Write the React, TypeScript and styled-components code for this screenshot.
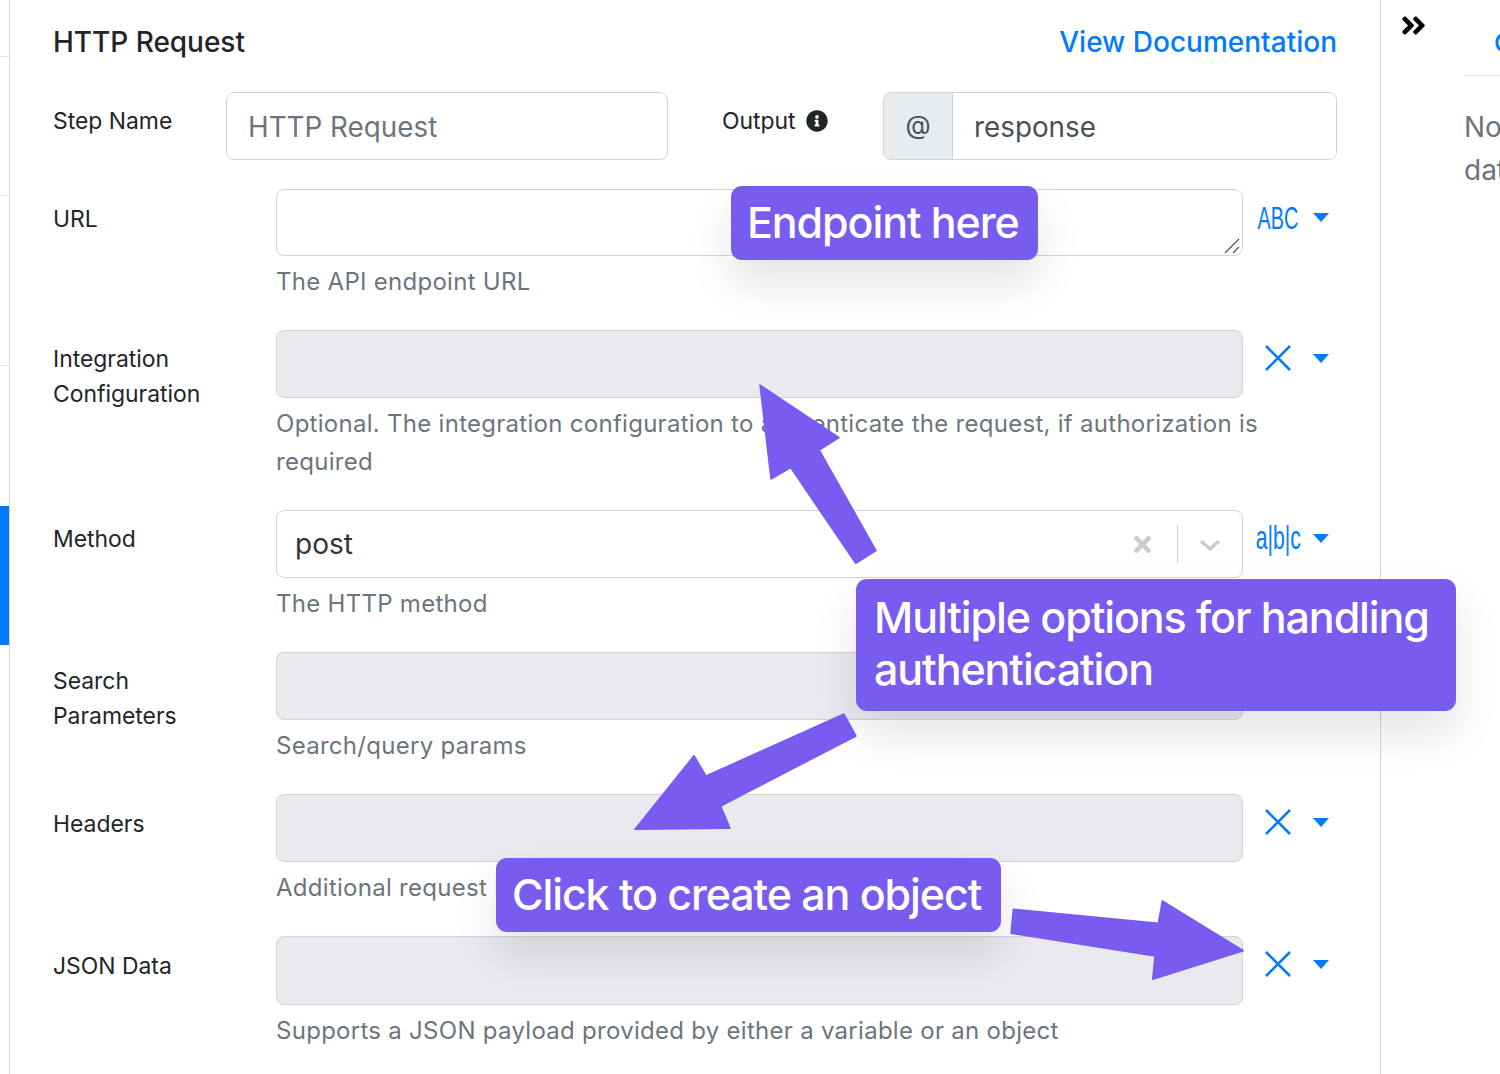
import React from "react";
import styled, { createGlobalStyle } from "styled-components";
import { FaInfoCircle, FaAngleDoubleRight, FaTimes } from "react-icons/fa";

const Global = createGlobalStyle`
  html, body { margin: 0; padding: 0; background: #fff; }
  body { font-family: Inter, "Liberation Sans", sans-serif; color: #212529; }
  * { box-sizing: border-box; }
`;

const Page = styled.div`
  position: relative;
  display: flex;
  width: 1500px;
  height: 1074px;
  overflow: hidden;
`;
const Rail = styled.nav`
  width: 10px;
  flex: none;
  border-right: 1px solid #d4d4d4;
  display: flex;
  flex-direction: column;
`;
const RailItem = styled.div<{ $h: number; $active?: boolean; $plain?: boolean }>`
  height: ${(p) => p.$h}px;
  flex: none;
  background: ${(p) => (p.$active ? "#007bff" : "transparent")};
  border-bottom: 1px solid ${(p) => (p.$active || p.$plain ? "transparent" : "#e4e4e4")};
`;
const Main = styled.main`
  width: 1370px;
  flex: none;
  padding: 0 43px 0 43px;
`;
const Header = styled.header`
  height: 92px;
  padding-top: 23px;
  display: flex;
  justify-content: space-between;
  align-items: flex-start;
  line-height: 38px;
  font-size: 28px;
  font-weight: 500;
`;
const Title = styled.h1`
  margin: 0;
  font: inherit;
  letter-spacing: -0.03px;
`;
const DocLink = styled.a`
  color: #007bff;
`;
const StepRow = styled.div`
  display: flex;
  height: 68px;
  margin-bottom: 29px;
`;
const Label = styled.label<{ $pt?: number }>`
  display: block;
  font-size: 22.9px;
  line-height: 35px;
  padding-top: ${(p) => p.$pt ?? 12}px;
`;
const StepLabel = styled(Label)`
  width: 173px;
  flex: none;
`;
const OutputLabel = styled(Label)`
  width: 161px;
  flex: none;
  margin-left: 54px;
  display: flex;
  gap: 10px;
  align-items: flex-start;
  svg { margin-top: 6px; font-size: 22px; color: #212529; }
`;
const TextInput = styled.input`
  display: block;
  border: 1px solid #ced4da;
  border-radius: 8px;
  background: #fff;
  font: inherit;
  font-size: 27.8px;
  padding: 2px 21px 0;
  color: #495057;
  outline: none;
  &::placeholder { color: #6c757d; opacity: 1; }
`;
const StepInput = styled(TextInput)`
  width: 442px;
  height: 68px;
`;
const Group = styled.div`
  display: flex;
  width: 454px;
  height: 68px;
  border: 1px solid #ced4da;
  border-radius: 8px;
  overflow: hidden;
`;
const Addon = styled.span`
  width: 69px;
  flex: none;
  background: #e9ecef;
  border-right: 1px solid #ced4da;
  display: flex;
  align-items: center;
  justify-content: center;
  padding-bottom: 3px;
  font-size: 26px;
  color: #495057;
`;
const GroupInput = styled(TextInput)`
  border: 0;
  border-radius: 0;
  flex: 1;
  min-width: 0;
`;
const Row = styled.div`
  display: grid;
  grid-template-columns: 223px 967px 94px;
  margin-bottom: 29px;
`;
const Field = styled.div`
  position: relative;
  min-width: 0;
`;
const TextArea = styled.textarea`
  display: block;
  width: 967px;
  height: 67px;
  border: 1px solid #ced4da;
  border-radius: 8px;
  background: #fff;
  resize: none;
  outline: none;
`;
const ResizeHandle = styled.svg`
  position: absolute;
  left: 948px;
  top: 48px;
  width: 17px;
  height: 17px;
  color: #555;
`;
const Blank = styled.div<{ $h?: number }>`
  height: ${(p) => p.$h ?? 68}px;
  border: 1px solid #ced4da;
  border-radius: 8px;
  background: #e9eaee;
`;
const Help = styled.p`
  margin: 7px 0 0;
  width: 1000px;
  font-size: 24px;
  letter-spacing: 0.28px;
  line-height: 38px;
  color: #6c757d;
`;
const SelectBox = styled.div`
  height: 68px;
  border: 1px solid #ced4da;
  border-radius: 8px;
  display: flex;
  align-items: center;
  padding-left: 18px;
  font-size: 28px;
  color: #333;
`;
const SelectValue = styled.span`
  flex: 1;
`;
const ClearIcon = styled(FaTimes)`
  color: #ccc;
  font-size: 25px;
  margin-right: 22px;
`;
const Separator = styled.span`
  width: 1px;
  height: 38px;
  background: #ccc;
`;
const Chevron = styled.svg`
  width: 24px;
  height: 24px;
  margin: 2px 20px 0 20px;
  color: #ccc;
`;
const Selector = styled.div`
  height: 57px;
  position: relative;
  display: flex;
  align-items: center;
  color: #007bff;
`;
const SelectorIcon = styled.span`
  width: 70px;
  display: flex;
  justify-content: center;
  align-items: center;
`;
const NarrowText = styled.span<{ $size: number; $sx: number; $up?: number }>`
  display: inline-block;
  font-family: "Liberation Sans", sans-serif;
  font-size: ${(p) => p.$size}px;
  line-height: 1;
  margin-top: ${(p) => -(p.$up ?? 0)}px;
  transform: scaleX(${(p) => p.$sx});
  white-space: nowrap;
`;
const ClearGlyph = styled.svg`
  width: 26px;
  height: 26px;
  margin-top: -1px;
`;
const Caret = styled.svg`
  width: 16px;
  height: 9px;
  margin-top: 0;
`;
const Aside = styled.aside`
  position: relative;
  flex: 1;
  border-left: 1px solid #d4d4d4;
  padding: 75px 0 0 83px;
  width: 120px;
  white-space: nowrap;
`;
const Collapse = styled(FaAngleDoubleRight)`
  position: absolute;
  left: 18px;
  top: 11px;
  font-size: 29px;
  color: #000;
`;
const TabLabel = styled.span`
  position: absolute;
  left: 113px;
  top: 27px;
  font-size: 26px;
  color: #007bff;
  font-weight: 500;
`;
const AsideRule = styled.div`
  border-top: 1px solid #dee2e6;
  margin-bottom: 30px;
  width: 60px;
`;
const Empty = styled.p`
  margin: 0;
  width: 36px;
  font-size: 28px;
  line-height: 43px;
  color: #6c757d;
  overflow: visible;
  white-space: normal;
`;
const Callout = styled.div<{ $l: number; $t: number; $w: number; $h: number; $tall?: boolean }>`
  position: absolute;
  left: ${(p) => p.$l}px;
  top: ${(p) => p.$t}px;
  width: ${(p) => p.$w}px;
  height: ${(p) => p.$h}px;
  padding: ${(p) => (p.$tall ? "12px 0 0 18px" : "10px 0 0 16px")};
  background: #785bef;
  color: #fff;
  border-radius: 11px;
  font-size: 43px;
  line-height: 52px;
  font-weight: 500;
  letter-spacing: -1.1px;
  white-space: nowrap;
  box-shadow: 0 22px 45px rgba(0, 0, 0, 0.11);
`;
const Arrows = styled.svg`
  position: absolute;
  inset: 0;
  width: 1500px;
  height: 1074px;
  pointer-events: none;
`;

const X = () => (
  <ClearGlyph viewBox="0 0 26 26" fill="none" stroke="currentColor" strokeWidth="2.6">
    <path d="M1 1 L25 25 M25 1 L1 25" />
  </ClearGlyph>
);

const Sel = ({ icon }: { icon: React.ReactNode }) => (
  <Selector>
    <SelectorIcon>{icon}</SelectorIcon>
    <Caret viewBox="0 0 16 9"><path d="M0 0 H16 L8 9 Z" fill="currentColor" /></Caret>
  </Selector>
);

const Arrow = ({ pts }: { pts: string }) => (
  <polygon points={pts} fill="#785bef" stroke="#785bef" strokeWidth="1.5" strokeLinejoin="round" />
);

export default function App() {
  return (
    <Page>
      <Global />
      <Rail>
        <RailItem $h={57} />
        <RailItem $h={139} />
        <RailItem $h={170} />
        <RailItem $h={140} $plain />
        <RailItem $h={139} $active />
      </Rail>
      <Main>
        <Header>
          <Title>HTTP Request</Title>
          <DocLink>View Documentation</DocLink>
        </Header>
        <StepRow>
          <StepLabel>Step Name</StepLabel>
          <StepInput placeholder="HTTP Request" />
          <OutputLabel>Output <FaInfoCircle /></OutputLabel>
          <Group>
            <Addon>@</Addon>
            <GroupInput defaultValue="response" />
          </Group>
        </StepRow>
        <Row>
          <Label $pt={13}>URL</Label>
          <Field>
            <TextArea />
            <ResizeHandle viewBox="0 0 17 17" fill="none" stroke="currentColor" strokeWidth="1.3">
              <path d="M1 16 L15 2 M9 16 L15 10" />
            </ResizeHandle>
            <Help>The API endpoint URL</Help>
          </Field>
          <Sel icon={<NarrowText $size={32} $sx={0.62}>ABC</NarrowText>} />
        </Row>
        <Row>
          <Label>Integration<br />Configuration</Label>
          <Field>
            <Blank />
            <Help>Optional. The integration configuration to authenticate the request, if authorization is required</Help>
          </Field>
          <Sel icon={<X />} />
        </Row>
        <Row>
          <Label>Method</Label>
          <Field>
            <SelectBox>
              <SelectValue>post</SelectValue>
              <ClearIcon />
              <Separator />
              <Chevron viewBox="0 0 24 24" fill="none" stroke="currentColor" strokeWidth="3.5">
                <path d="M3 8 L12 16 L21 8" />
              </Chevron>
            </SelectBox>
            <Help>The HTTP method</Help>
          </Field>
          <Sel icon={<NarrowText $size={33} $sx={0.64} $up={3}>a|b|c</NarrowText>} />
        </Row>
        <Row>
          <Label>Search<br />Parameters</Label>
          <Field>
            <Blank />
            <Help>Search/query params</Help>
          </Field>
          <Sel icon={<X />} />
        </Row>
        <Row>
          <Label $pt={13}>Headers</Label>
          <Field>
            <Blank />
            <Help>Additional request headers</Help>
          </Field>
          <Sel icon={<X />} />
        </Row>
        <Row>
          <Label $pt={13}>JSON Data</Label>
          <Field>
            <Blank $h={69} />
            <Help>Supports a JSON payload provided by either a variable or an object</Help>
          </Field>
          <Sel icon={<X />} />
        </Row>
      </Main>
      <Aside>
        <Collapse />
        <TabLabel>Output</TabLabel>
        <AsideRule />
        <Empty>No data</Empty>
      </Aside>
      <Callout $l={731} $t={186} $w={307} $h={74}>Endpoint here</Callout>
      <Callout $l={856} $t={579} $w={600} $h={132} $tall>Multiple options for handling<br />authentication</Callout>
      <Callout $l={496} $t={858} $w={505} $h={74}>Click to create an object</Callout>
      <Arrows viewBox="0 0 1500 1074">
        <Arrow pts="760,385 839,437.7 819.3,450 876,550.7 855.7,563.3 790.7,467.7 771,479" />
        <Arrow pts="844,714 856,736 720.7,806 730,828.3 635,829.3 694,755.7 706,776" />
        <Arrow pts="1013.3,909.3 1158.3,923.3 1162.3,901 1243.3,950.7 1152.7,979.3 1155,956 1011,933.3" />
      </Arrows>
    </Page>
  );
}
